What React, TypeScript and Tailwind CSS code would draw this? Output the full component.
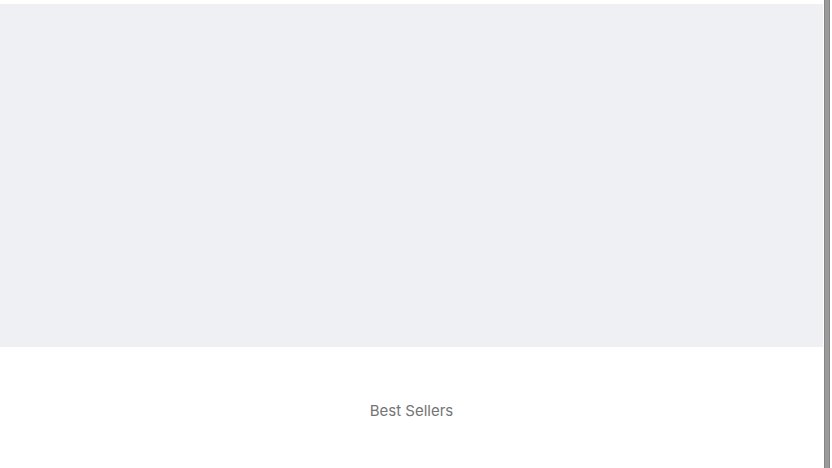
import React from "react";

export default function App() {
  return (
    <div className="flex h-[468px] w-[832px] overflow-hidden bg-white">
      <div className="flex w-[823px] flex-col pt-[4px]">
        <div className="h-[343px] w-full bg-[#eef0f3]" />
        <div className="flex justify-center pt-[52px]">
          <h2
            className="text-[15px] leading-[24px] text-[#747474]"
            style={{ fontFamily: "Inter, 'Open Sans', sans-serif" }}
          >
            Best Sellers
          </h2>
        </div>
      </div>
      <div className="ml-[1px] h-full w-[6px] border-x border-[#858585] bg-[#9a9a9a]" />
    </div>
  );
}
